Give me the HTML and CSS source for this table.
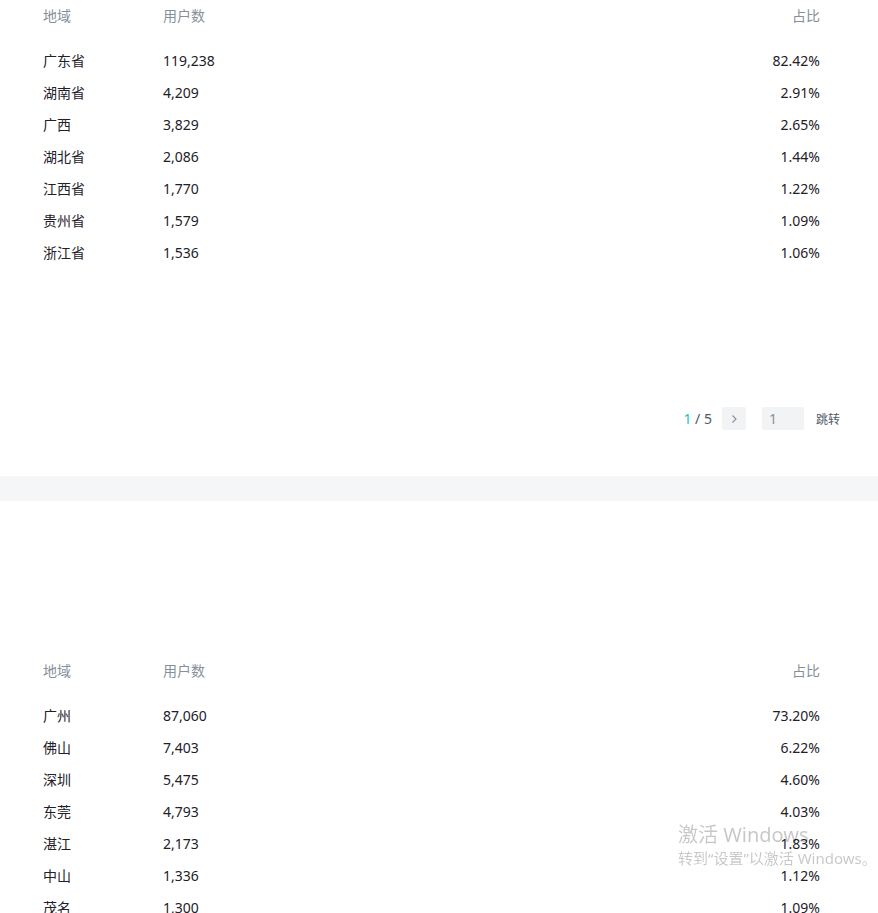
FILE: index.html
```html
<!DOCTYPE html>
<html lang="zh-CN">
<head>
    <meta charset="UTF-8">
    <meta name="viewport" content="width=device-width, initial-scale=1.0">
    <title>地域分布</title>
    <link rel="stylesheet" href="styles.css">
</head>
<body>
    <div class="card card-top">
        <div class="table">
            <div class="row head">
                <span class="c-name">地域</span>
                <span class="c-num">用户数</span>
                <span class="c-pct">占比</span>
            </div>
            <div class="body">
                <div class="row"><span class="c-name">广东省</span><span class="c-num">119,238</span><span class="c-pct">82.42%</span></div>
                <div class="row"><span class="c-name">湖南省</span><span class="c-num">4,209</span><span class="c-pct">2.91%</span></div>
                <div class="row"><span class="c-name">广西</span><span class="c-num">3,829</span><span class="c-pct">2.65%</span></div>
                <div class="row"><span class="c-name">湖北省</span><span class="c-num">2,086</span><span class="c-pct">1.44%</span></div>
                <div class="row"><span class="c-name">江西省</span><span class="c-num">1,770</span><span class="c-pct">1.22%</span></div>
                <div class="row"><span class="c-name">贵州省</span><span class="c-num">1,579</span><span class="c-pct">1.09%</span></div>
                <div class="row"><span class="c-name">浙江省</span><span class="c-num">1,536</span><span class="c-pct">1.06%</span></div>
            </div>
        </div>
        <div class="pager">
            <span class="pages"><span class="current">1</span> / 5</span>
            <button class="next" type="button">
                <svg width="10" height="10" viewBox="0 0 10 10"><path d="M3.5 1.5 L7 5 L3.5 8.5" fill="none" stroke="#86909c" stroke-width="1.1"/></svg>
            </button>
            <input class="jump-input" type="text" value="1">
            <span class="jump">跳转</span>
        </div>
    </div>

    <div class="divider"></div>

    <div class="card card-bottom">
        <div class="table">
            <div class="row head">
                <span class="c-name">地域</span>
                <span class="c-num">用户数</span>
                <span class="c-pct">占比</span>
            </div>
            <div class="body">
                <div class="row"><span class="c-name">广州</span><span class="c-num">87,060</span><span class="c-pct">73.20%</span></div>
                <div class="row"><span class="c-name">佛山</span><span class="c-num">7,403</span><span class="c-pct">6.22%</span></div>
                <div class="row"><span class="c-name">深圳</span><span class="c-num">5,475</span><span class="c-pct">4.60%</span></div>
                <div class="row"><span class="c-name">东莞</span><span class="c-num">4,793</span><span class="c-pct">4.03%</span></div>
                <div class="row"><span class="c-name">湛江</span><span class="c-num">2,173</span><span class="c-pct">1.83%</span></div>
                <div class="row"><span class="c-name">中山</span><span class="c-num">1,336</span><span class="c-pct">1.12%</span></div>
                <div class="row"><span class="c-name">茂名</span><span class="c-num">1,300</span><span class="c-pct">1.09%</span></div>
            </div>
        </div>
    </div>

    <div class="watermark">
        <div class="wm-title">激活 Windows</div>
        <div class="wm-sub">转到“设置”以激活 Windows。</div>
    </div>
</body>
</html>
```

FILE: styles.css
```css
body {
    margin: 0;
    padding: 0;
    background-color: #fff;
    color: #1d2129;
    font-family: "Noto Sans", "Noto Sans CJK SC", sans-serif;
    font-size: 14px;
    overflow: hidden;
}
.card {
    background-color: #fff;
}
.card-top {
    height: 476px;
}
.card-bottom {
    padding-top: 154px;
}
.table {
    padding: 0 58px 0 43px;
}
.row {
    display: flex;
    align-items: center;
    height: 32px;
    line-height: 32px;
}
.head {
    color: #86909c;
    margin-bottom: 13px;
}
.c-name {
    width: 120px;
}
.c-num {
    flex: 1;
}
.c-pct {
    text-align: right;
}
.pager {
    display: flex;
    align-items: center;
    justify-content: flex-end;
    padding-right: 38px;
    margin-top: 138px;
    height: 23px;
}
.pages {
    color: #4e5969;
    margin-right: 10px;
}
.current {
    color: #0fc6c2;
}
.next {
    width: 24px;
    height: 23px;
    padding: 0;
    border: none;
    border-radius: 2px;
    background-color: #f2f3f5;
    display: flex;
    align-items: center;
    justify-content: center;
    margin-right: 16px;
}
.jump-input {
    width: 42px;
    height: 23px;
    box-sizing: border-box;
    border: none;
    border-radius: 2px;
    background-color: #f2f3f5;
    padding: 0 7px;
    color: #86909c;
    font-family: "Noto Sans", sans-serif;
    font-size: 14px;
    margin-right: 12px;
}
.jump {
    color: #4e5969;
    font-size: 12px;
}
.divider {
    height: 25px;
    background-color: #f5f6f8;
}
.watermark {
    position: fixed;
    left: 678px;
    top: 822px;
    color: rgba(0, 0, 0, 0.22);
    pointer-events: none;
}
.wm-title {
    font-size: 20px;
    line-height: 26px;
}
.wm-sub {
    font-size: 15px;
    line-height: 20px;
}
```
